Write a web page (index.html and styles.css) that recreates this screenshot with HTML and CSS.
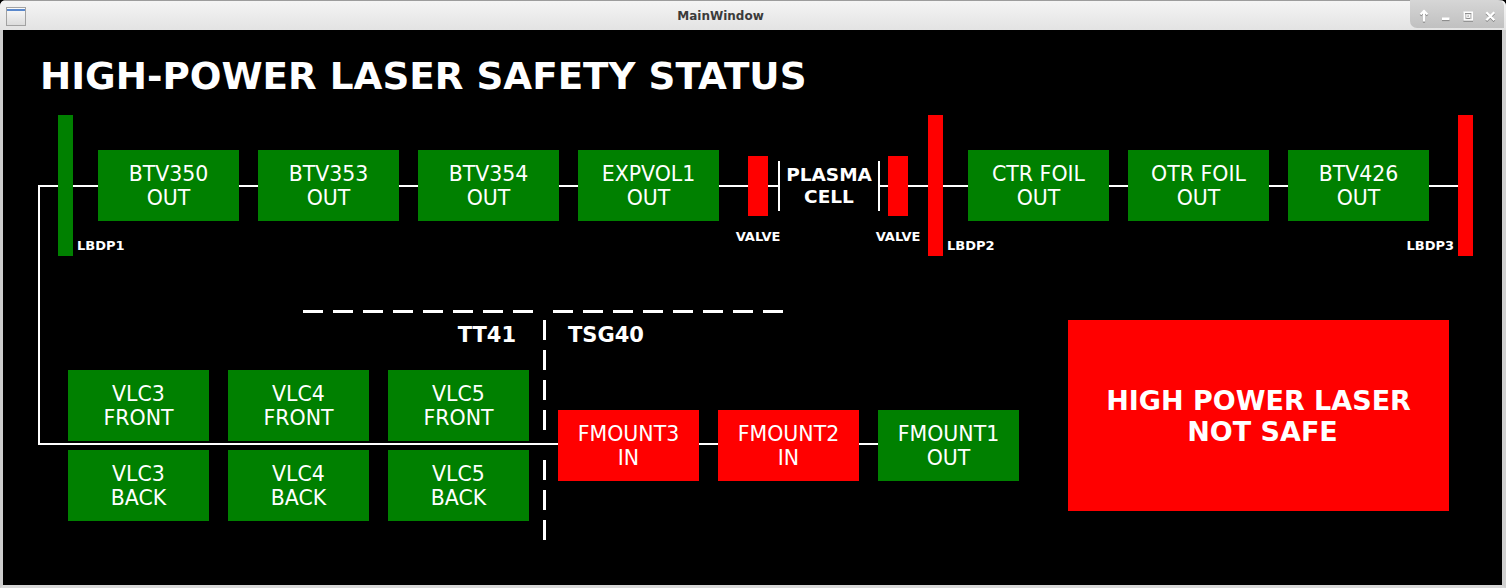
FILE: index.html
```html
<!DOCTYPE html>
<html lang="en">
<head>
<meta charset="utf-8">
<title>MainWindow</title>
<link rel="stylesheet" href="styles.css">
</head>
<body>
<div class="window">
  <header class="titlebar">
    <div class="app-icon"><span class="app-icon-bar"></span></div>
    <div class="window-title">MainWindow</div>
    <div class="window-controls">
      <svg class="ctl-icons" width="94" height="28" viewBox="0 0 94 28" aria-hidden="true">
        <g fill="none" stroke="#fff" stroke-width="2.2" stroke-linecap="square">
          <path d="M14 20.5 V11.5"/>
          <path d="M10.5 14.5 L14 11 L17.5 14.5" stroke-linecap="butt" stroke-linejoin="miter"/>
          <rect x="54.2" y="12.3" width="8" height="7.6" stroke-width="1.6"/>
          <rect x="56.8" y="14.9" width="2.8" height="2.4" stroke-width="1.1"/>
          <path d="M76.3 12.3 L84.3 20.3 M84.3 12.3 L76.3 20.3" stroke-width="2.3" stroke-linecap="butt"/>
        </g>
        <rect x="32" y="17.5" width="7.5" height="2.6" fill="#fff"/>
      </svg>
    </div>
  </header>
  <main class="content">
    <svg class="wires" width="1499" height="555" viewBox="0 0 1499 555" aria-hidden="true">
      <polyline points="1455,156 36,156 36,414 876,414" fill="none" stroke="#fff" stroke-width="2" stroke-linejoin="miter"/>
      <g stroke="#fff" stroke-width="3" stroke-dasharray="20 10" fill="none">
        <path d="M300 281.5 H530"/>
        <path d="M550 281.5 H780"/>
        <path d="M541.5 290 V400"/>
        <path d="M541.5 430 V510"/>
      </g>
    </svg>

    <h1 class="heading">HIGH-POWER LASER SAFETY STATUS</h1>

    <div class="beamline">
      <div class="stopper ok lbdp1"><span class="tag tag-right">LBDP1</span></div>
      <div class="group">
        <div class="device ok">BTV350<br>OUT</div>
        <div class="device ok">BTV353<br>OUT</div>
        <div class="device ok">BTV354<br>OUT</div>
        <div class="device ok">EXPVOL1<br>OUT</div>
      </div>
      <div class="valve upstream"><span class="tag tag-below">VALVE</span></div>
      <div class="plasma">PLASMA<br>CELL</div>
      <div class="valve downstream"><span class="tag tag-below">VALVE</span></div>
      <div class="stopper bad lbdp2"><span class="tag tag-right">LBDP2</span></div>
      <div class="group">
        <div class="device ok">CTR FOIL<br>OUT</div>
        <div class="device ok">OTR FOIL<br>OUT</div>
        <div class="device ok">BTV426<br>OUT</div>
      </div>
      <div class="stopper bad lbdp3"><span class="tag tag-left">LBDP3</span></div>
    </div>

    <div class="lower">
      <section class="sector tt41">
        <div class="sector-label">TT41</div>
        <div class="vlc-grid">
          <div class="device ok">VLC3<br>FRONT</div>
          <div class="device ok">VLC4<br>FRONT</div>
          <div class="device ok">VLC5<br>FRONT</div>
          <div class="device ok">VLC3<br>BACK</div>
          <div class="device ok">VLC4<br>BACK</div>
          <div class="device ok">VLC5<br>BACK</div>
        </div>
      </section>
      <section class="sector tsg40">
        <div class="sector-label">TSG40</div>
        <div class="fmount-row">
          <div class="device bad">FMOUNT3<br>IN</div>
          <div class="device bad">FMOUNT2<br>IN</div>
          <div class="device ok">FMOUNT1<br>OUT</div>
        </div>
      </section>
      <div class="alarm">
        <span class="alarm-line">HIGH POWER LASER</span>
        <span class="alarm-line second">NOT SAFE</span>
      </div>
    </div>
  </main>
</div>
</body>
</html>
```

FILE: styles.css
```css
* {
  box-sizing: border-box;
}

html,
body {
  margin: 0;
  padding: 0;
}

body {
  width: 1506px;
  height: 588px;
  overflow: hidden;
  background: #000;
  font-family: "DejaVu Sans", "Noto Sans", sans-serif;
}

.window {
  width: 1506px;
  height: 588px;
  display: flex;
  flex-direction: column;
  background: #d6d6d6;
  border-radius: 6px 6px 0 0;
  overflow: hidden;
}

/* ---------- title bar ---------- */
.titlebar {
  flex: none;
  height: 30px;
  display: flex;
  align-items: flex-start;
  background: linear-gradient(#f4f4f4, #e3e3e3);
  border-top: 1px solid #9c9c9c;
}

.app-icon {
  flex: none;
  width: 20px;
  height: 19px;
  margin: 6px 0 0 6px;
  border: 1px solid #a2a2a2;
  background: linear-gradient(#fbfbfb, #dcdcdc);
}

.app-icon-bar {
  display: block;
  height: 2px;
  margin: 1px 0 0;
  background: #5a88cc;
}

.window-title {
  flex: 1;
  padding-left: 5px;
  padding-top: 1px;
  text-align: center;
  font-size: 12px;
  line-height: 29px;
  font-weight: bold;
  color: #3b3b3b;
}

.window-controls {
  flex: none;
  width: 94px;
  height: 28px;
  margin-top: -1px;
  margin-right: 2px;
  background: linear-gradient(#d6d6d6, #c0c0c0);
  border-bottom-left-radius: 7px;
  border-top-right-radius: 6px;
}

.ctl-icons {
  display: block;
  filter: drop-shadow(0 1px 0 rgba(0, 0, 0, 0.35));
}

/* ---------- content ---------- */
.content {
  flex: 1;
  position: relative;
  background: #000;
  border-left: 3px solid #cdcdcd;
  border-right: 4px solid #cfcfcf;
  border-bottom: 3px solid #d8d8d8;
  color: #fff;
}

.wires {
  position: absolute;
  left: 0;
  top: 0;
}

.heading {
  margin: 28px 0 0 37px;
  font-size: 37.3px;
  line-height: 36px;
  font-weight: bold;
  white-space: nowrap;
}

/* ---------- beamline row ---------- */
.beamline {
  position: relative;
  display: flex;
  align-items: center;
  height: 141px;
  margin-top: 21px;
}

.group {
  display: flex;
  gap: 19px;
  margin-left: 25px;
}

.ok {
  background: #008000;
}

.bad {
  background: #ff0000;
}

.device {
  flex: none;
  width: 141px;
  height: 71px;
  display: flex;
  align-items: center;
  justify-content: center;
  text-align: center;
  font-size: 20.5px;
  line-height: 24px;
  color: #fff;
  white-space: nowrap;
}

.stopper {
  position: relative;
  flex: none;
  width: 15px;
  align-self: stretch;
}

.lbdp1 {
  margin-left: 55px;
}

.lbdp2 {
  margin-left: 20px;
}

.lbdp3 {
  margin-left: 29px;
}

.valve {
  position: relative;
  flex: none;
  width: 20px;
  height: 60px;
  background: #ff0000;
}

.valve.upstream {
  margin-left: 29px;
}

.valve.downstream {
  margin-left: 8px;
}

.plasma {
  flex: none;
  width: 102px;
  height: 50px;
  margin-left: 10px;
  border-left: 2px solid #fff;
  border-right: 2px solid #fff;
  background: #000;
  display: flex;
  align-items: center;
  justify-content: center;
  text-align: center;
  font-weight: bold;
  font-size: 18.5px;
  line-height: 22px;
}

.tag {
  position: absolute;
  font-weight: bold;
  font-size: 13px;
  line-height: 13px;
  white-space: nowrap;
  color: #fff;
}

.tag-right {
  left: calc(100% + 4px);
  bottom: 4px;
}

.tag-left {
  right: calc(100% + 4px);
  bottom: 4px;
}

.tag-below {
  top: calc(100% + 14px);
  left: 50%;
  transform: translateX(-50%);
}

/* ---------- lower area ---------- */
.lower {
  position: relative;
  display: flex;
  align-items: flex-start;
  margin-top: 64px;
}

.sector {
  flex: none;
  width: 461px;
  display: flex;
  flex-direction: column;
}

.sector-label {
  margin-top: 3px;
  font-weight: bold;
  font-size: 21px;
  line-height: 24px;
}

.tt41 {
  margin-left: 65px;
}

.tt41 .sector-label {
  text-align: right;
  padding-right: 13px;
}

.tsg40 {
  margin-left: 29px;
}

.tsg40 .sector-label {
  padding-left: 10px;
}

.vlc-grid {
  display: grid;
  grid-template-columns: repeat(3, 141px);
  grid-auto-rows: 71px;
  column-gap: 19px;
  row-gap: 9px;
  margin-top: 23px;
}

.fmount-row {
  display: flex;
  gap: 19px;
  margin-top: 63px;
}

.alarm {
  flex: none;
  width: 381px;
  height: 191px;
  margin-left: 49px;
  background: #ff0000;
  display: flex;
  flex-direction: column;
  align-items: center;
  justify-content: center;
  font-weight: bold;
  font-size: 27px;
  line-height: 31px;
  white-space: nowrap;
}

.alarm-line.second {
  padding-left: 8px;
}
```
